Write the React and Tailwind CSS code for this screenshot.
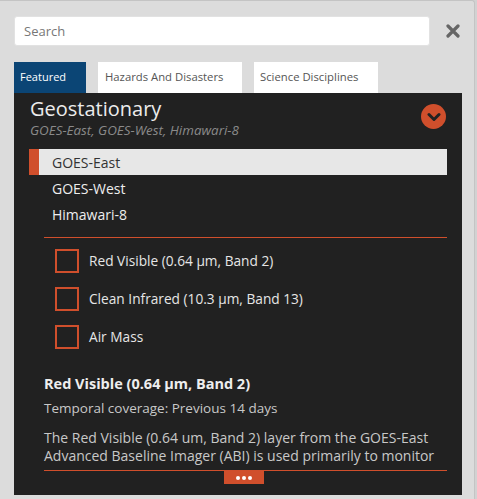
import React from 'react';

const ORANGE = 'bg-[#d04f2c]';

const Checkbox = ({ label }) => (
    <label className="flex items-center gap-[10px] h-[38px]">
        <span className="w-[24px] h-[24px] border-2 border-[#d04f2c] block shrink-0" />
        <span className="text-[13.7px] text-[#e6e6e6]">{label}</span>
    </label>
);

export default function App() {
    const sources = ['GOES-East', 'GOES-West', 'Himawari-8'];
    const layers = [
        'Red Visible (0.64 µm, Band 2)',
        'Clean Infrared (10.3 µm, Band 13)',
        'Air Mass',
    ];

    return (
        <div className="w-[477px] h-[499px] bg-[#d2d2d2] font-['Open_Sans',sans-serif]">
            <div className="w-[475px] h-[499px] bg-[#dcdcdc] border-t border-r border-[#c4c4c4] rounded-tr-[3px] pt-[15px] pl-[14px]">
                {/* search row */}
                <div className="flex items-center">
                    <input
                        placeholder="Search"
                        className="w-[416px] h-[30px] bg-white rounded-[3px] border border-[#e2e2e2] px-[9px] text-[13px] text-[#555] placeholder:text-[#777] outline-none"
                    />
                    <button className="ml-[16px] text-[#666]">
                        <svg width="14" height="14" viewBox="0 0 14 14">
                            <path d="M2 2 L12 12 M12 2 L2 12" stroke="currentColor" strokeWidth="3.2" strokeLinecap="round" />
                        </svg>
                    </button>
                </div>

                {/* tabs */}
                <div className="flex gap-[12px] mt-[16px] h-[31px]">
                    <div className="w-[72px] bg-[#0b4575] text-white text-[11px] pl-[6px] flex items-center">Featured</div>
                    <div className="w-[144px] bg-white text-[#555] text-[11.3px] pl-[7px] flex items-center">Hazards And Disasters</div>
                    <div className="w-[124px] bg-white text-[#555] text-[11.3px] pl-[6px] flex items-center">Science Disciplines</div>
                </div>

                {/* dark panel */}
                <div className="w-[448px] h-[402px] bg-[#212121] pt-[3px] overflow-hidden">
                    <div className="flex justify-between items-start pl-[16px] pr-[16px]">
                        <div>
                            <h2 className="text-[20px] leading-[26px] text-[#ececec]">Geostationary</h2>
                            <p className="text-[13.4px] italic leading-[16px] text-[#8a8a8a]">GOES-East, GOES-West, Himawari-8</p>
                        </div>
                        <div className={`w-[25px] h-[25px] rounded-full ${ORANGE} flex items-center justify-center mt-[8px]`}>
                            <svg width="14" height="10" viewBox="0 0 14 10">
                                <path d="M2 2.5 L7 7.5 L12 2.5" fill="none" stroke="#222" strokeWidth="3" strokeLinecap="round" strokeLinejoin="round" />
                            </svg>
                        </div>
                    </div>

                    <ul className="mt-[11px] ml-[15px] mr-[15px]">
                        {sources.map((s, i) => (
                            <li
                                key={s}
                                className={
                                    i === 0
                                        ? 'h-[26px] flex items-center bg-[#e7e7e7] text-[#333] text-[14px]'
                                        : 'h-[26px] flex items-center text-[#eee] text-[14px]'
                                }
                            >
                                <span className={i === 0 ? `w-[10px] h-full ${ORANGE}` : 'w-[10px]'} />
                                <span className="pl-[13px]">{s}</span>
                            </li>
                        ))}
                    </ul>

                    <div className={`h-px ${ORANGE} ml-[30px] mr-[15px] mt-[10px]`} />

                    <div className="ml-[41px] mt-[4px]">
                        {layers.map((l) => (
                            <Checkbox key={l} label={l} />
                        ))}
                    </div>

                    <div className="ml-[30px] mr-[15px] mt-[18px]">
                        <h3 className="text-[14.5px] font-bold text-[#eee] leading-[20px]">Red Visible (0.64 µm, Band 2)</h3>
                        <p className="text-[13.5px] text-[#c8c8c8] mt-[5px] leading-[18px]">Temporal coverage: Previous 14 days</p>
                        <p className="text-[14px] text-[#c8c8c8] mt-[12px] leading-[18px]">
                            The Red Visible (0.64 um, Band 2) layer from the GOES-East Advanced Baseline Imager (ABI) is used primarily to monitor
                        </p>
                        <div className="mt-[5px] border-t border-[#d04f2c] flex justify-center">
                            <button className={`w-[40px] h-[13px] ${ORANGE} flex items-center justify-center gap-[2px] -ml-[3px]`}>
                                <span className="w-[4px] h-[4px] rounded-full bg-white" />
                                <span className="w-[4px] h-[4px] rounded-full bg-white" />
                                <span className="w-[4px] h-[4px] rounded-full bg-white" />
                            </button>
                        </div>
                    </div>
                </div>
            </div>
        </div>
    );
}
